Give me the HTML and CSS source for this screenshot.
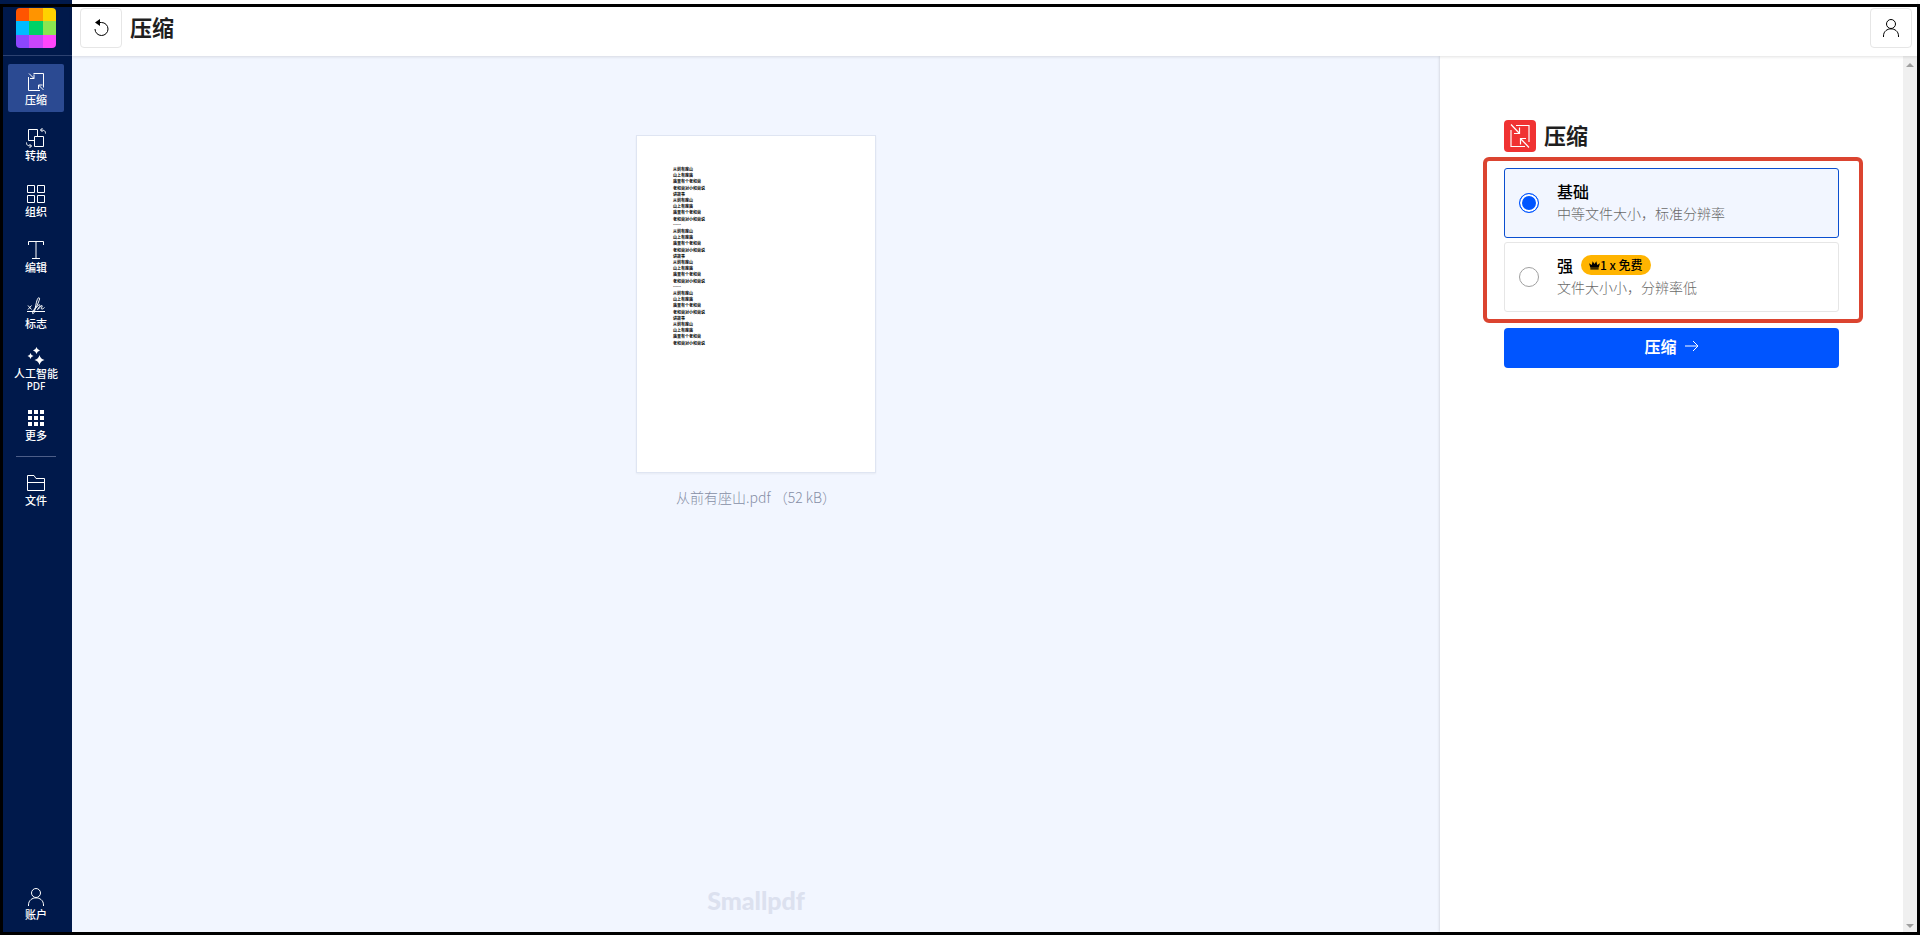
FILE: index.html
```html
<!DOCTYPE html>
<html lang="zh-CN">

<head>
    <meta charset="UTF-8">
    <meta name="viewport" content="width=device-width, initial-scale=1.0">
    <title>压缩 - Smallpdf</title>
    <link rel="stylesheet" href="styles.css">
</head>

<body>
    <nav class="sidebar">
        <a class="logo" href="#" aria-label="Smallpdf">
            <svg width="40" height="40" viewBox="0 0 40 40">
                <clipPath id="logoClip"><rect width="40" height="40" rx="4" /></clipPath>
                <g clip-path="url(#logoClip)">
                    <rect width="13" height="13" fill="#ff5500" />
                    <rect x="13" width="14" height="13" fill="#ff9400" />
                    <rect x="27" width="13" height="13" fill="#ffd200" />
                    <rect y="13" width="13" height="14" fill="#00bbff" />
                    <rect x="13" y="13" width="14" height="14" fill="#00d267" />
                    <rect x="27" y="13" width="13" height="14" fill="#8ae650" />
                    <rect y="27" width="13" height="13" fill="#8c46ff" />
                    <rect x="13" y="27" width="14" height="13" fill="#c846fa" />
                    <rect x="27" y="27" width="13" height="13" fill="#ff46fa" />
                </g>
            </svg>
        </a>
        <div class="nav-list">
            <a class="nav-item active" href="#">
                <svg class="icon" viewBox="0 0 20 20"><path d="M7.500 1.500h10V15.500M2.500 5v13.500H14M3 1.500l5 5M8 2.500v4H4M17.500 18l-5-5M12.500 17v-4h4" /></svg>
                <span>压缩</span>
            </a>
            <a class="nav-item" href="#">
                <svg class="icon" viewBox="0 0 20 20"><path d="M8.500 12.500h-6v-11h9v7M8.500 8.500h9v10h-9zM19.500 5.500c0-2.500-1-3.500-5-3.500M16.500 0l-2 2 2 2M.5 14.500c0 2.500 1 3.500 5 3.500M3.500 16l2 2-2 2" /></svg>
                <span>转换</span>
            </a>
            <a class="nav-item" href="#">
                <svg class="icon" viewBox="0 0 20 20"><path d="M1.500 1.500h7v7h-7zM11.500 1.500h7v7h-7zM1.500 11.500h7v7h-7zM11.500 11.500h7v7h-7z" /></svg>
                <span>组织</span>
            </a>
            <a class="nav-item" href="#">
                <svg class="icon" viewBox="0 0 20 20"><path d="M2.500 5V1.500h15V5M10 1.500v17M6 18.500h8" /></svg>
                <span>编辑</span>
            </a>
            <a class="nav-item" href="#">
                <svg class="icon" viewBox="0 0 20 20"><path d="M1 15.500h18M2 9.500l3.500 4M5.500 9.500l-3.500 4M6.500 15C9 14 13 6 13.500 3c.3-2-1.500-1.500-2.200.5C10 7 9.500 11 8.500 15.500c-.5 2-2 3-2 1.500 0-2 4-5 6-8 1-1 2 0 1 1.500l-2 3c1.500 0 3-4 4.500-4 1 .5-1.500 3-.5 3.500 1 .3 2-.5 3-1.500" /></svg>
                <span>标志</span>
            </a>
            <a class="nav-item nav-item-ai" href="#">
                <svg class="icon icon-solid" viewBox="0 0 20 20"><path d="M10.500 1q.6 2.900 3.500 3.500-2.900.6-3.500 3.500-.6-2.900-3.500-3.500 2.900-.6 3.500-3.500zM4.500 7q.5 2.500 3 3-2.500.5-3 3-.5-2.500-3-3 2.500-.5 3-3zM13.500 9q.9 4.100 5 5-4.100.9-5 5-.9-4.100-5-5 4.100-.9 5-5z" /></svg>
                <span>人工智能</span>
                <span class="nav-sub">PDF</span>
            </a>
            <a class="nav-item" href="#">
                <svg class="icon icon-solid" viewBox="0 0 20 20"><path d="M2 2h4v4H2zM8 2h4v4H8zM14 2h4v4h-4zM2 8h4v4H2zM8 8h4v4H8zM14 8h4v4h-4zM2 14h4v4H2zM8 14h4v4H8zM14 14h4v4h-4z" /></svg>
                <span>更多</span>
            </a>
        </div>
        <hr class="nav-divider">
        <a class="nav-item" href="#">
            <svg class="icon" viewBox="0 0 20 20"><path d="M1.500 17.500v-15H8l2 3h8.500v12zM1.500 9.500h17" /></svg>
            <span>文件</span>
        </a>
        <a class="nav-item nav-account" href="#">
            <svg class="icon" viewBox="0 0 20 20"><circle cx="10" cy="6" r="4.500" /><path d="M2.500 19v-1c0-9.500 15-9.500 15 0v1" /></svg>
            <span>账户</span>
        </a>
    </nav>

    <div class="page">
        <header class="topbar">
            <button class="icon-button" type="button" aria-label="重新开始">
                <svg class="icon" viewBox="0 0 20 20"><path d="M7 4.500h3.500a6.500 6.500 0 1 1-6.500 6.500" /><path class="solid" d="M4 4.500L9 1v7z" /></svg>
            </button>
            <h1>压缩</h1>
            <button class="icon-button account-button" type="button" aria-label="账户">
                <svg class="icon" viewBox="0 0 20 20"><circle cx="10" cy="6" r="4.500" /><path d="M2.500 19v-1c0-9.500 15-9.500 15 0v1" /></svg>
            </button>
        </header>

        <div class="workspace">
            <main class="preview">
                <figure class="document">
                    <div class="sheet">
                        <div class="sheet-text">
                            <span>从前有座山</span>
                            <span>山上有座庙</span>
                            <span>庙里有个老和尚</span>
                            <span>老和尚对小和尚说</span>
                            <span>讲故事</span>
                            <span>从前有座山</span>
                            <span>山上有座庙</span>
                            <span>庙里有个老和尚</span>
                            <span>老和尚对小和尚说</span>
                            <span>……</span>
                            <span>从前有座山</span>
                            <span>山上有座庙</span>
                            <span>庙里有个老和尚</span>
                            <span>老和尚对小和尚说</span>
                            <span>讲故事</span>
                            <span>从前有座山</span>
                            <span>山上有座庙</span>
                            <span>庙里有个老和尚</span>
                            <span>老和尚对小和尚说</span>
                            <span>……</span>
                            <span>从前有座山</span>
                            <span>山上有座庙</span>
                            <span>庙里有个老和尚</span>
                            <span>老和尚对小和尚说</span>
                            <span>讲故事</span>
                            <span>从前有座山</span>
                            <span>山上有座庙</span>
                            <span>庙里有个老和尚</span>
                            <span>老和尚对小和尚说</span>
                        </div>
                    </div>
                    <figcaption>从前有座山.pdf （52 kB）</figcaption>
                </figure>
                <div class="watermark">Smallpdf</div>
            </main>

            <aside class="panel">
                <h2>
                    <svg width="32" height="32" viewBox="0 0 32 32">
                        <rect width="32" height="32" rx="4" fill="#f03232" />
                        <path class="tool-lines" d="M12 5.500h13V22M7 10v16.500h14M7 4.500l8.500 9M15.500 7.500v6H10M25 27.500l-8.500-9M16.500 24.500v-6H22" />
                    </svg>
                    <span>压缩</span>
                </h2>
                <form id="compressForm">
                    <div class="options">
                        <label class="option" for="basic">
                            <input type="radio" id="basic" name="level" checked>
                            <span class="option-text">
                                <span class="option-title">基础</span>
                                <span class="option-desc">中等文件大小，标准分辨率</span>
                            </span>
                        </label>
                        <label class="option" for="strong">
                            <input type="radio" id="strong" name="level">
                            <span class="option-text">
                                <span class="option-title">强
                                    <span class="badge">
                                        <svg width="11" height="10" viewBox="0 0 12 10"><path d="M0 3l3 2 1-4 2 3 2-3 1 4 3-2-1.500 5h-9zM1.500 8.500h9V10h-9z" /></svg>1 x 免费
                                    </span>
                                </span>
                                <span class="option-desc">文件大小小，分辨率低</span>
                            </span>
                        </label>
                    </div>
                    <button class="submit" type="submit">
                        压缩
                        <svg width="14" height="12" viewBox="0 0 14 12"><path d="M0 6h13M8 1l5 5-5 5" /></svg>
                    </button>
                </form>
            </aside>

            <div class="scrollbar">
                <span class="arrow arrow-up"></span>
                <span class="arrow arrow-down"></span>
            </div>
        </div>
    </div>

    <div class="frame"></div>
</body>

</html>
```

FILE: styles.css
```css
* {
    box-sizing: border-box;
}

body {
    font-family: "Noto Sans CJK SC", "Noto Sans", sans-serif;
    margin: 0;
    height: 100vh;
    display: flex;
    position: relative;
    color: #1f1f1f;
    background-color: #fff;
    overflow: hidden;
}

/* Sidebar */
.sidebar {
    width: 72px;
    flex-shrink: 0;
    display: flex;
    flex-direction: column;
    align-items: center;
    padding: 8px 0;
    background-color: #00194b;
}

.logo {
    width: 100%;
    height: 48px;
    display: flex;
    justify-content: center;
    border-bottom: 1px solid #2c4170;
}

.nav-list {
    display: flex;
    flex-direction: column;
    gap: 8px;
    padding: 8px 0;
}

.nav-item {
    width: 56px;
    height: 48px;
    padding-top: 8px;
    display: flex;
    flex-direction: column;
    align-items: center;
    border-radius: 2px;
    color: #fff;
    font-size: 11px;
    font-weight: 500;
    line-height: 14px;
    text-align: center;
    text-decoration: none;
    white-space: nowrap;
}

.nav-item.active {
    background-color: #2b4a92;
}

.nav-item-ai {
    padding-top: 2px;
}

.nav-sub {
    font-family: "Noto Sans", sans-serif;
    font-size: 10px;
    line-height: 12px;
}

.nav-divider {
    width: 40px;
    margin: 0 0 8px;
    border: 0;
    border-top: 1px solid #4d5e88;
}

.nav-account {
    margin-top: auto;
}

.icon {
    width: 20px;
    height: 20px;
    flex-shrink: 0;
    fill: none;
    stroke: currentColor;
    stroke-width: 1;
    overflow: visible;
}

.icon-solid,
.icon .solid {
    fill: currentColor;
    stroke: none;
}

/* Page */
.page {
    flex: 1;
    min-width: 0;
    display: flex;
    flex-direction: column;
    padding: 0 3px 3px 0;
}

.topbar {
    height: 56px;
    flex-shrink: 0;
    display: flex;
    align-items: center;
    gap: 8px;
    padding: 0 5px 0 8px;
    position: relative;
    background-color: #fff;
    box-shadow: 0 1px 3px rgba(0, 0, 0, 0.12);
}

.topbar h1 {
    margin: 0;
    padding-bottom: 4px;
    font-size: 22px;
    line-height: 32px;
}

.icon-button {
    width: 42px;
    height: 40px;
    display: flex;
    align-items: center;
    justify-content: center;
    padding: 0;
    border: 1px solid #e6e6e6;
    border-radius: 4px;
    background-color: #fff;
    color: #000;
}

.account-button {
    margin-left: auto;
}

.workspace {
    flex: 1;
    min-height: 0;
    display: flex;
}

.preview {
    flex: 1;
    display: flex;
    flex-direction: column;
    align-items: center;
    padding: 79px 0 16px;
    background-color: #f2f6ff;
}

.document {
    margin: 0;
    text-align: center;
}

.sheet {
    width: 240px;
    height: 338px;
    padding: 30px 36px;
    border: 1px solid #dfe5f2;
    background-color: #fff;
    box-shadow: 0 1px 2px rgba(0, 0, 0, 0.05);
}

.sheet-text {
    height: 180px;
    display: flex;
    flex-direction: column;
    justify-content: space-between;
    color: #000;
    font-size: 4px;
    font-weight: 700;
    line-height: 6px;
    text-align: left;
}

.document figcaption {
    margin-top: 14px;
    color: #868ea5;
    font-size: 14px;
    font-weight: 300;
    line-height: 20px;
}

.watermark {
    margin-top: auto;
    color: #dce1ef;
    font-family: Lato, sans-serif;
    font-size: 25px;
    font-weight: 900;
    line-height: 32px;
}

/* Settings panel */
.panel {
    width: 463px;
    padding: 64px 64px 0;
    background-color: #fff;
    box-shadow: 0 0 3px rgba(0, 0, 0, 0.2);
}

.panel h2 {
    display: flex;
    gap: 8px;
    margin: 0 0 16px;
    font-size: 22px;
    line-height: 28px;
}

.tool-lines {
    fill: none;
    stroke: #fff;
    stroke-width: 1.2;
}

.options {
    position: relative;
    display: flex;
    flex-direction: column;
    gap: 4px;
    margin-bottom: 16px;
}

/* red outline round both options */
.options::after {
    content: "";
    position: absolute;
    inset: -11px -24px -11px -21px;
    border: 4px solid #db4430;
    border-radius: 6px;
    pointer-events: none;
}

.option {
    height: 70px;
    display: flex;
    align-items: center;
    gap: 18px;
    padding: 0 14px;
    border: 1px solid #e6e6e6;
    border-radius: 3px;
}

.option:has(input:checked) {
    border-color: #0b4fd0;
    background-color: #f2f6ff;
}

.option input {
    appearance: none;
    width: 20px;
    height: 20px;
    flex-shrink: 0;
    margin: 0;
    border: 1px solid #a0a0a0;
    border-radius: 50%;
    background-color: #fff;
}

.option input:checked {
    border-color: #0055ff;
    background-color: #0055ff;
    box-shadow: inset 0 0 0 2px #fff;
}

.option-text {
    display: flex;
    flex-direction: column;
    padding-bottom: 2px;
}

.option-title {
    display: flex;
    align-items: center;
    gap: 8px;
    color: #000;
    font-size: 16px;
    font-weight: 500;
    line-height: 22px;
}

.option-desc {
    color: #6a6a6a;
    font-size: 14px;
    font-weight: 300;
    line-height: 22px;
}

.badge {
    height: 20px;
    display: flex;
    align-items: center;
    padding: 0 8px;
    border-radius: 10px;
    background-color: #ffb400;
    font-size: 12px;
    line-height: 20px;
}

.submit {
    width: 100%;
    height: 40px;
    display: flex;
    align-items: center;
    justify-content: center;
    gap: 8px;
    padding: 0 0 4px;
    border: none;
    border-radius: 4px;
    background-color: #0055ff;
    color: #fff;
    font-family: inherit;
    font-size: 16px;
    font-weight: 700;
    cursor: pointer;
}

.submit svg {
    fill: none;
    stroke: #fff;
}

/* Scrollbar */
.scrollbar {
    width: 14px;
    display: flex;
    flex-direction: column;
    align-items: center;
    justify-content: space-between;
    padding: 7px 0 4px;
    background-color: #f0f0f0;
}

.arrow {
    border: 4px solid transparent;
}

.arrow-up {
    border-top: 0;
    border-bottom-color: #a0a0a0;
}

.arrow-down {
    border-bottom: 0;
    border-top-color: #a0a0a0;
}

/* black outline round the whole window */
.frame {
    position: absolute;
    inset: 4px 0 0;
    border: 3px solid #000;
    pointer-events: none;
}
```
